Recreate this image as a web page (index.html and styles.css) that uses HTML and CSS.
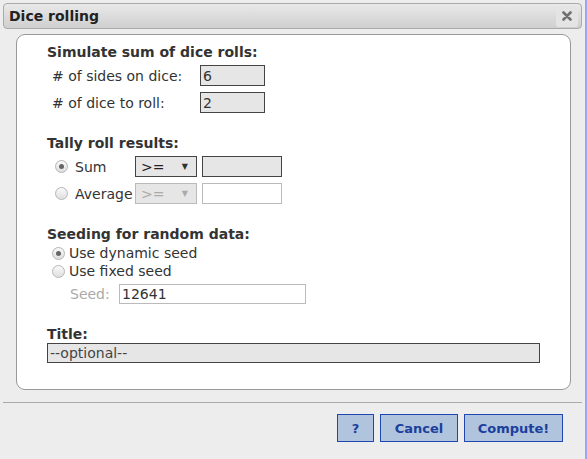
FILE: index.html
```html
<!DOCTYPE html>
<html>
<head>
<meta charset="utf-8">
<link rel="stylesheet" href="styles.css">
</head>
<body>
<div class="dialog">
  <div class="titlebar">
    <span class="title">Dice rolling</span>
    <span class="close"><svg width="10" height="10" viewBox="0 0 10 10"><path d="M1.5 1.5 L8.5 8.5 M8.5 1.5 L1.5 8.5" stroke="#6f6f6f" stroke-width="2.6" stroke-linecap="round"/></svg></span>
  </div>
  <div class="panel">
    <div class="section">
      <div class="heading">Simulate sum of dice rolls:</div>
      <div class="row indent">
        <span class="label">&#35; of sides on dice:</span>
        <span class="field dark w65">6</span>
      </div>
      <div class="row indent">
        <span class="label">&#35; of dice to roll:</span>
        <span class="field dark w65">2</span>
      </div>
    </div>
    <div class="section">
      <div class="heading">Tally roll results:</div>
      <div class="row tally">
        <span class="radio on"></span>
        <span class="rlabel">Sum</span>
        <span class="select"><span>&gt;=</span><span class="arrow">&#9660;</span></span>
        <span class="field dark w80"></span>
      </div>
      <div class="row tally">
        <span class="radio"></span>
        <span class="rlabel">Average</span>
        <span class="select disabled"><span>&gt;=</span><span class="arrow">&#9660;</span></span>
        <span class="field light w80"></span>
      </div>
    </div>
    <div class="section">
      <div class="heading tight">Seeding for random data:</div>
      <div class="optrow"><span class="radio on"></span><span>Use dynamic seed</span></div>
      <div class="optrow"><span class="radio"></span><span>Use fixed seed</span></div>
      <div class="row seedrow">
        <span class="seedlabel">Seed:</span>
        <span class="field light w187">12641</span>
      </div>
    </div>
    <div class="section">
      <div class="heading tighter">Title:</div>
      <div class="field dark wide">--optional--</div>
    </div>
  </div>
  <div class="footer">
    <button class="btn b-help">?</button>
    <button class="btn b-cancel">Cancel</button>
    <button class="btn b-compute">Compute!</button>
  </div>
</div>
</body>
</html>
```
FILE: styles.css
```css
html, body {
  margin: 0;
  padding: 0;
}
body {
  background: #ededed;
  font-family: "DejaVu Sans", Verdana, sans-serif;
  font-size: 14px;
  color: #333;
  width: 587px;
  height: 459px;
  overflow: hidden;
}
.dialog {
  width: 585px;
  height: 459px;
  background: #ededed;
  border-right: 2px solid #a3a3f5;
  box-sizing: content-box;
  display: flex;
  flex-direction: column;
}
.titlebar {
  margin: 3px 3px 0 3px;
  height: 24px;
  border: 1px solid #aaa;
  border-radius: 4px;
  background: linear-gradient(#e9e9e9, #cfcfcf);
  display: flex;
  align-items: center;
  justify-content: space-between;
  padding: 0 3px 0 5px;
}
.title {
  font-weight: bold;
  font-size: 14px;
  color: #222;
}
.close {
  width: 22px;
  height: 21px;
  border-radius: 3px;
  background: #e4e4e4;
  display: flex;
  align-items: center;
  justify-content: center;
}
.panel {
  margin: 5px 0 0 16px;
  width: 523px;
  height: 345px;
  background: #fff;
  border: 1px solid #999;
  border-radius: 9px;
  padding: 9px 0 0 30px;
  display: flex;
  flex-direction: column;
  gap: 22px;
}
.section {
  display: flex;
  flex-direction: column;
}
.heading {
  font-weight: bold;
  font-size: 14px;
  color: #333;
  line-height: 16px;
  margin-bottom: 5px;
}
.heading.tight { margin-bottom: 2px; }
.heading.tighter { margin-bottom: 1px; }
.row {
  display: flex;
  align-items: center;
  height: 21px;
  margin-bottom: 6px;
}
.row:last-child { margin-bottom: 0; }
.indent { padding-left: 5px; }
.label {
  width: 148px;
}
.field {
  box-sizing: border-box;
  height: 21px;
  display: flex;
  align-items: center;
  padding-left: 2px;
  font-size: 14px;
}
.dark {
  background: #e6e6e6;
  border: 1px solid #444;
}
.light {
  background: #fff;
  border: 1px solid #bbb;
}
.w65 { width: 65px; }
.w80 { width: 80px; }
.w187 { width: 187px; }
.wide {
  width: 493px;
  height: 20px;
  color: #444;
}
.tally { padding-left: 8px; }
.radio {
  box-sizing: border-box;
  width: 13px;
  height: 13px;
  border-radius: 50%;
  border: 1px solid #b5b5b5;
  background: linear-gradient(#fafafa, #dedede);
  display: inline-flex;
  align-items: center;
  justify-content: center;
  flex: none;
}
.radio.on::after {
  content: "";
  width: 5px;
  height: 5px;
  border-radius: 50%;
  background: #666;
}
.rlabel {
  margin-left: 7px;
  width: 60px;
}
.select {
  box-sizing: border-box;
  width: 62px;
  height: 21px;
  border: 1px solid #444;
  background: #e6e6e6;
  display: flex;
  align-items: center;
  justify-content: space-between;
  padding: 0 8px 0 5px;
  margin-right: 5px;
  color: #222;
}
.arrow { font-size: 8px; color: #333; }
.select.disabled {
  border-color: #bbb;
  color: #aaa;
}
.select.disabled .arrow { color: #aaa; }
.optrow {
  display: flex;
  align-items: center;
  height: 18px;
  padding-left: 5px;
  gap: 4px;
}
.seedrow {
  padding-left: 23px;
  margin-top: 4px;
  height: 20px;
}
.seedlabel {
  color: #aaa;
  width: 49px;
}
.seedrow .field { height: 20px; }
.footer {
  margin: 12px 3px 0 3px;
  border-top: 1px solid #aaa;
  display: flex;
  justify-content: flex-end;
  padding: 11px 19px 0 0;
  gap: 6px;
}
.btn {
  box-sizing: border-box;
  height: 28px;
  background: #b0c4de;
  border: 1px solid #1f47b0;
  color: #1c3f9c;
  font-family: "DejaVu Sans", Verdana, sans-serif;
  font-weight: bold;
  font-size: 13px;
  padding: 0;
}
.b-help { width: 37px; }
.b-cancel { width: 78px; }
.b-compute { width: 99px; }
```
